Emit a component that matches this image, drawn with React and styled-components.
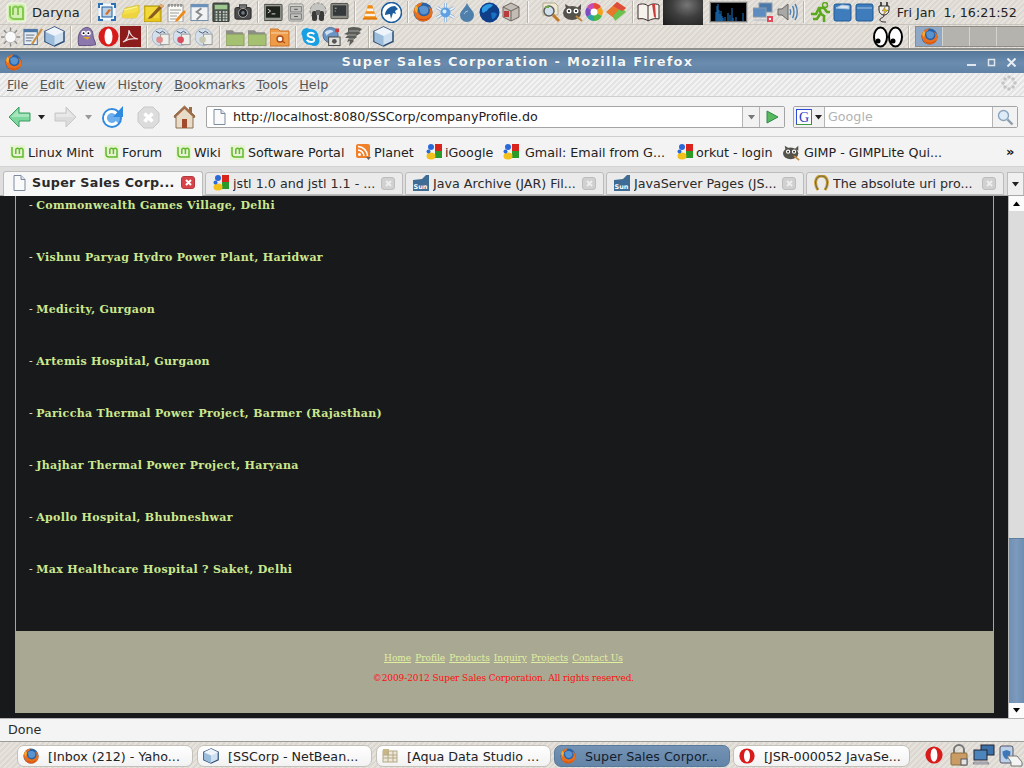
import React from 'react';
import styled, { createGlobalStyle } from 'styled-components';

const GlobalStyle = createGlobalStyle`
  html, body { margin: 0; padding: 0; background: #e4e0da; overflow: hidden; }
  * { box-sizing: border-box; }
`;

const stripes = `repeating-linear-gradient(135deg, #e6e2dc 0 2px, #dcd8d1 2px 4px)`;

const Desktop = styled.div`
  width: 1024px;
  height: 768px;
  display: flex;
  flex-direction: column;
  overflow: hidden;
  font-family: "DejaVu Sans", sans-serif;
  font-size: 12.7px;
  color: #2e3436;
`;

const Panel = styled.div`
  height: ${p => p.$h}px;
  flex: none;
  display: flex;
  align-items: center;
  background: ${stripes};
  border-bottom: ${p => p.$edge || 'none'};
`;

const Slot = styled.div`
  width: ${p => p.$w}px;
  height: 22px;
  margin-left: ${p => p.$ml}px;
  flex: none;
  display: flex;
  align-items: center;
  justify-content: center;
  svg { display: block; }
`;

const Divider = styled.div`
  width: 2px;
  height: 22px;
  flex: none;
  margin-left: ${p => p.$ml}px;
  border-left: 1px solid #b8b4ae;
  border-right: 1px solid #f8f6f2;
`;

const UserName = styled.span`
  margin-left: 5px;
  font-size: 13px;
  color: #222;
  letter-spacing: 0.1px;
`;

const Clock = styled.span`
  margin-left: 6px;
  font-size: 12.7px;
  color: #222;
  white-space: pre;
`;

const Pager = styled.div`
  margin-left: 5px;
  width: 109px;
  height: 21px;
  display: grid;
  grid-template-columns: 27px 27px 27px 28px;
  background: #b9b6b1;
  border: 1px solid #8f8c88;
`;

const PagerCell = styled.div`
  background: ${p => (p.$on ? '#8ea8c6' : '#b5b3ae')};
  border-right: 1px solid #d5d3ce;
  display: flex;
  align-items: center;
  justify-content: center;
`;

const Preview = styled.div`
  width: 40px;
  height: 25px;
  margin-left: 3px;
  flex: none;
  background: radial-gradient(ellipse at 60% 20%, #767676 0%, #3e3e3e 45%, #1c1c1c 100%);
`;

const Graph = styled.div`
  width: 39px;
  height: 22px;
  margin-left: 6px;
  flex: none;
  background: #000;
  border: 1px solid #c4c2bc;
  outline: 1px solid #777;
  outline-offset: -2px;
`;

const TitleBar = styled.div`
  height: 22px;
  flex: none;
  margin-top: 1px;
  padding: 0 5px;
  display: flex;
  align-items: center;
  background: linear-gradient(#54779a, #6b8cae 55%, #5f82a5);
  color: #f4f6f8;
`;

const TitleText = styled.div`
  flex: 1;
  text-align: center;
  font-size: 13px;
  font-weight: bold;
  letter-spacing: 1.25px;
  padding: 0 0 2px 46px;
  text-shadow: 0 0 1px #3e5a78;
`;

const WindowButtons = styled.div`
  display: flex;
  align-items: center;
  gap: 11px;
  margin-right: 3px;
`;

const MenuBar = styled.div`
  height: 24px;
  flex: none;
  display: flex;
  align-items: center;
  padding: 0 8px 0 7px;
  color: #555;
  background: repeating-linear-gradient(135deg, #e4e4e4 0 2px, #f2f2f2 2px 4px);
  border-bottom: 1px solid #cfcfcf;
`;

const MenuItem = styled.span`
  margin-right: 11.5px;
  u { text-underline-offset: 1px; }
`;

const Throbber = styled.div`
  margin-left: auto;
  margin-right: -1px;
`;

const NavBar = styled.div`
  height: 40px;
  flex: none;
  display: flex;
  align-items: center;
  padding: 1px 0 0 8px;
  background: #f3f3f3;
  border-bottom: 1px solid #cfcfcf;
`;

const NavIcon = styled.div`
  width: ${p => p.$w}px;
  margin-left: ${p => p.$ml || 0}px;
  flex: none;
  display: flex;
  align-items: center;
  justify-content: center;
`;

const Field = styled.div`
  height: 22px;
  flex: none;
  width: ${p => p.$w}px;
  margin-left: ${p => p.$ml}px;
  display: flex;
  align-items: stretch;
  background: #fff;
  border: 1px solid #a4a4a4;
  border-radius: 2px;
  line-height: 20px;
`;

const FieldText = styled.div`
  flex: 1;
  display: flex;
  align-items: center;
  gap: 7px;
  padding-left: ${p => (p.$muted ? 3 : 6)}px;
  color: ${p => (p.$muted ? '#b2b2b2' : '#222')};
  white-space: nowrap;
  overflow: hidden;
`;

const FieldButton = styled.div`
  width: ${p => p.$w}px;
  flex: none;
  display: flex;
  align-items: center;
  justify-content: center;
  gap: 2px;
  background: #f2f2f2;
  border-left: ${p => (p.$first ? 'none' : '1px solid #b4b4b4')};
  border-right: ${p => (p.$first ? '1px solid #b4b4b4' : 'none')};
`;

const BookmarksBar = styled.div`
  height: 30px;
  flex: none;
  display: flex;
  align-items: center;
  padding: 1px 0 0 10px;
  background: #f3f3f3;
  border-bottom: 1px solid #d4d4d4;
  color: #222;
`;

const Bookmark = styled.div`
  width: ${p => p.$w}px;
  flex: none;
  display: flex;
  align-items: center;
  gap: ${p => p.$gap || 3}px;
  white-space: nowrap;
`;

const More = styled.span`
  margin-top: -2px;
  font-size: 13px;
  font-weight: bold;
  color: #111;
`;

const TabStrip = styled.div`
  height: 29px;
  flex: none;
  display: flex;
  align-items: flex-end;
  gap: 2px;
  padding-left: 3px;
  background: #dedede;
  border-bottom: 1px solid #a8a8a8;
`;

const Tab = styled.div`
  width: ${p => p.$w}px;
  height: ${p => (p.$active ? 25 : 23)}px;
  flex: none;
  margin-bottom: ${p => (p.$active ? -1 : 0)}px;
  display: flex;
  align-items: center;
  gap: ${p => (p.$active ? 6 : 4)}px;
  padding: 0 7px ${p => (p.$active ? 3 : 1)}px ${p => (p.$active ? 9 : 7)}px;
  background: ${p => (p.$active ? '#f7f7f7' : '#ebebeb')};
  border: 1px solid #bcbcbc;
  border-bottom: ${p => (p.$active ? 'none' : '1px solid #bcbcbc')};
  border-radius: 3px 3px 0 0;
  font-weight: ${p => (p.$active ? 'bold' : 'normal')};
  letter-spacing: ${p => (p.$active ? '0.3px' : '0')};
  color: #2a2a2a;
  white-space: nowrap;
`;

const TabLabel = styled.span`
  flex: 1;
  overflow: hidden;
`;

const TabClose = styled.span`
  width: 14px;
  height: 13px;
  flex: none;
  border-radius: 3px;
  background: ${p => (p.$active ? '#d9444a' : '#d0d0d0')};
  border: 1px solid ${p => (p.$active ? '#b03a40' : '#bdbdbd')};
  display: flex;
  align-items: center;
  justify-content: center;
`;

const TabMenu = styled.div`
  width: 17px;
  height: 23px;
  flex: none;
  margin-left: 1px;
  background: #f0f0f0;
  border: 1px solid #bcbcbc;
  border-bottom: none;
  display: flex;
  align-items: center;
  justify-content: center;
`;

const Viewport = styled.div`
  height: 522px;
  flex: none;
  display: flex;
  background: #18191b;
`;

const Page = styled.div`
  width: 1008px;
  flex: none;
  padding: 0 14px 5px 15px;
  display: flex;
  flex-direction: column;
`;

const Sheet = styled.div`
  flex: 1;
  display: flex;
  flex-direction: column;
  border-left: 1px solid #a9a893;
  border-right: 1px solid #a9a893;
`;

const ProjectList = styled.div`
  flex: 1;
  padding: 2px 0 0 13px;
  font-family: "DejaVu Serif", serif;
`;

const Project = styled.div`
  height: 52px;
  font-size: 11px;
  line-height: 16px;
  font-weight: bold;
  letter-spacing: 0.33px;
  color: #cbe88f;
`;

const Dash = styled.span`
  font-weight: normal;
  letter-spacing: 0;
  color: #dde8c8;
`;

const PageFooter = styled.div`
  height: 82px;
  flex: none;
  background: #a9a893;
  padding-top: 20px;
  padding-right: 2px;
  text-align: center;
  font-family: "DejaVu Serif", serif;
  font-size: 9px;
`;

const FooterLinks = styled.div`
  height: 14px;
  line-height: 14px;
  display: flex;
  justify-content: center;
  gap: 4px;
`;

const FooterLink = styled.a`
  color: #e0f0a0;
  text-decoration: underline;
`;

const Copyright = styled.div`
  margin-top: 6px;
  height: 14px;
  line-height: 14px;
  letter-spacing: -0.1px;
  color: #ff1010;
`;

const Scrollbar = styled.div`
  width: 16px;
  flex: none;
  display: flex;
  flex-direction: column;
  background: #dcdcdc;
  border-left: 1px solid #b8b8b8;
`;

const ScrollButton = styled.div`
  height: 15px;
  flex: none;
  background: #fbfbfb;
  display: flex;
  align-items: center;
  justify-content: center;
`;

const Track = styled.div`
  flex: 1;
  padding-top: 327px;
  display: flex;
`;

const Thumb = styled.div`
  flex: 1;
  background: linear-gradient(90deg, #6f90b4, #7c9abc 50%, #6d8eb2);
  border-top: 1px solid #5f7f9f;
`;

const StatusBar = styled.div`
  height: 24px;
  flex: none;
  display: flex;
  align-items: center;
  padding: 0 0 2px 8px;
  color: #2a2a2a;
  background: #f4f4f4;
  border-top: 1px solid #b4b4b4;
  border-bottom: 1px solid #9c9c9c;
`;

const TaskButton = styled.div`
  width: ${p => p.$w}px;
  height: 22px;
  flex: none;
  margin: 2px 0 0 ${p => p.$ml}px;
  display: flex;
  align-items: center;
  gap: 9px;
  padding-left: 5px;
  border: 1px solid ${p => (p.$active ? '#5a7a9c' : '#c4c0ba')};
  border-radius: 7px;
  background: ${p => (p.$active ? 'linear-gradient(#7392b4, #6485a8)' : 'linear-gradient(#fff, #f2f2f2)')};
  color: ${p => (p.$active ? '#14202c' : '#222')};
  white-space: nowrap;
`;

const Svg = ({ s = 20, h, children }) => (
  <svg width={s} height={h || s} viewBox={`0 0 ${s} ${h || s}`}>{children}</svg>
);

// launchers and tray icons, all hand drawn on a small grid
const Mint = ({ s = 21 }) => (
  <svg width={s} height={s} viewBox="0 0 21 21">
    <rect x="1" y="1" width="19" height="19" rx="4" fill="#d4efb4" stroke="#f2faea" />
    <path d="M4 4v9a4 4 0 0 0 4 4h9V7a2.500 2.500 0 0 0-5 0v6M12 7a2.500 2.500 0 0 0-5 0v6" fill="none" stroke="#84c850" strokeWidth="2" />
  </svg>
);
const Firefox = ({ s = 20 }) => (
  <svg width={s} height={s} viewBox="0 0 20 20">
    <circle cx="10" cy="10" r="9.500" fill="#2a62a8" />
    <path d="M6 6c2-3 7-3 9 0 1 2 0 5-2 6-3 1-5 0-6-2z" fill="#5a94d0" />
    <path d="M1 8C2 3 6 .500 10 .500c-1 1-2 2-2 3-3 1-4 3-3 6 1 4 5 6 9 4 2-1 3-3 3-6-1-1-1-2-2-3 3 1 4.500 4 4.500 6 0 5-4 9-9.500 9S.500 14 1 8z" fill="#e8701c" />
    <path d="M2 13c2 4 6 6 10 5 3-.500 5-2 6-4-3 3-7 4-10 3-3-.500-5-2-6-4z" fill="#c8400f" />
    <path d="M1.500 7c0-1 1-3 2-4 0 1 .5 2 1.500 3-1 2-1 4-1 5-1-1-2-2-2.500-4z" fill="#f8b02c" />
  </svg>
);
const SelectTool = () => (
  <Svg>
    <rect x="1" y="1" width="18" height="18" rx="4" fill="#f4f8fc" stroke="#c8d4e4" />
    <rect x="5" y="5" width="10" height="10" fill="#bcd0e4" stroke="#1f5f9f" />
    <path d="M2 6V2h4M14 2h4v4M18 14v4h-4M6 18H2v-4" fill="none" stroke="#2f6fb4" strokeWidth="2" />
    <path d="M8 12l4-5 2 1-4 5z" fill="#d0702a" />
  </Svg>
);
const Sticky = () => (
  <Svg>
    <path d="M1 13l3-7 14-3v8l-3 5H2z" fill="#f4e04c" stroke="#c8b430" strokeWidth=".6" />
    <path d="M1 13l14-3 3-2v3l-3 5H2z" fill="#eed43e" />
    <path d="M3 8l13-3" stroke="#fff6a0" />
  </Svg>
);
const Note = () => (
  <Svg>
    <rect x="0" y="4" width="17" height="16" fill="#e8c820" stroke="#a89010" />
    <rect x="2" y="5" width="13" height="11" fill="#f2d838" />
    <path d="M5 15L17 2l3 2L8 16l-4 1z" fill="#8a5a20" />
    <path d="M17 2l3 2-2 2-3-2z" fill="#e4b070" />
  </Svg>
);
const Notepad = () => (
  <Svg>
    <rect x="1" y="3" width="15" height="17" fill="#fbfbf6" stroke="#9a9a9a" />
    <path d="M2 2v3M5 2v3M8 2v3M11 2v3M14 2v3" stroke="#666" />
    <path d="M3 8h11M3 11h9M3 14h7M3 17h6" stroke="#9a9a9a" />
    <path d="M9 17l8-9 2 2-8 9-3 1z" fill="#ee8a1c" />
  </Svg>
);
const Windowed = () => (
  <Svg>
    <rect x="1" y="2" width="18" height="17" fill="#f0f2f4" stroke="#6c86a4" />
    <rect x="1" y="2" width="18" height="3" fill="#6a92bc" />
    <path d="M12 6l-5 4 5 3-5 5" fill="none" stroke="#8a8a8a" strokeWidth="2" />
  </Svg>
);
const Calculator = () => (
  <Svg>
    <rect x="1" y="0" width="18" height="21" rx="1" fill="#4c564e" stroke="#2c322e" />
    <rect x="3" y="2" width="14" height="5" fill="#9cc88e" />
    {[9, 12, 15, 18].map(y => [4, 8, 12, 15].map(x => <rect key={`${x}${y}`} x={x} y={y} width="2" height="2" fill="#c8ccc8" />))}
  </Svg>
);
const Camera = () => (
  <Svg>
    <rect x="1" y="5" width="18" height="13" rx="2" fill="#4c4c4c" stroke="#222" />
    <rect x="6" y="2" width="8" height="4" fill="#777" stroke="#333" />
    <circle cx="10" cy="11" r="5" fill="#222" stroke="#aaa" />
    <circle cx="10" cy="11" r="2" fill="#6c7c8c" />
  </Svg>
);
const Terminal = () => (
  <Svg>
    <rect x="0" y="2" width="19" height="17" rx="1" fill="#9a9c96" stroke="#44463f" />
    <rect x="2" y="4" width="15" height="12" fill="#20241f" />
    <path d="M4 7l3 2-3 2M8 12h4" stroke="#e0e0d8" fill="none" />
  </Svg>
);
const Cabinet = () => (
  <Svg>
    <rect x="2" y="1" width="16" height="19" rx="2" fill="#d4d4d0" stroke="#8c8c88" />
    <rect x="4" y="4" width="12" height="6" fill="#c0c0bc" stroke="#777" />
    <rect x="4" y="12" width="12" height="6" fill="#c0c0bc" stroke="#777" />
    <path d="M8 7h4M8 15h4" stroke="#444" />
  </Svg>
);
const Binoculars = () => (
  <Svg>
    <circle cx="10" cy="9" r="8" fill="#c4c4c0" stroke="#8a8a86" strokeDasharray="3 1.500" />
    <rect x="4" y="9" width="5" height="10" rx="2" fill="#3a3a3a" />
    <rect x="11" y="9" width="5" height="10" rx="2" fill="#3a3a3a" />
    <rect x="8" y="8" width="4" height="5" fill="#666" />
  </Svg>
);
const Monitor = () => (
  <Svg>
    <rect x="1" y="1" width="18" height="16" rx="1" fill="#8c8c84" stroke="#4c4c48" />
    <rect x="3" y="3" width="14" height="11" fill="#34383a" />
    <path d="M5 6h2M5 9h1" stroke="#c8c8c8" />
  </Svg>
);
const Vlc = () => (
  <Svg>
    <path d="M7 2h5l5 15H2z" fill="#f08a10" />
    <path d="M6 6h7l1 3H5zM4 12h11l1 3H3z" fill="#f8f4ec" />
    <rect x="1" y="17" width="17" height="2" fill="#e07a0c" />
  </Svg>
);
const Thunder = () => (
  <Svg s={21}>
    <circle cx="10.500" cy="10.500" r="10" fill="#fff" stroke="#1c5c9c" strokeWidth="1.500" />
    <path d="M4 12c1-5 5-8 10-8l3 3-3 2 1 3-3-1-2 6-1-5-5 1z" fill="#1c5c9c" />
  </Svg>
);
const Snow = () => (
  <Svg s={21} h={21}>
    <path d="M10.500 1v19M2 5.500l17 10M19 5.500l-17 10" stroke="#7ea8d4" strokeWidth="3" />
    <path d="M10.500 1v19M2 5.500l17 10M19 5.500l-17 10" stroke="#eef4fc" strokeWidth="1.600" />
    <circle cx="10.500" cy="10.500" r="5" fill="#5ea0e4" />
    <circle cx="9.500" cy="9.500" r="2" fill="#d8ecfc" />
  </Svg>
);
const Drop = () => (
  <Svg s={16} h={20}>
    <path d="M8 1c2 5 7 8 7 12a7 7 0 0 1-14 0C1 9 6 6 8 1z" fill="#4f80ac" />
    <path d="M5 12c1-2 3-3 4-3" stroke="#a8c8e4" fill="none" />
  </Svg>
);
const Globe = () => (
  <Svg s={21} h={21}>
    <circle cx="10.500" cy="10.500" r="10" fill="#0e3f88" />
    <path d="M3 6c3-4 8-5 11-3-2 3-5 3-6 6-2 0-3 3-5 1z" fill="#2c9ae4" />
    <path d="M12 11c3-1 5 0 6 1-1 3-3 5-5 5z" fill="#1c70c4" />
  </Svg>
);
const Pack = () => (
  <Svg s={21} h={21}>
    <path d="M10 1l8 4v10l-8 4-8-4V5z" fill="#c2bcb4" stroke="#6c6660" />
    <path d="M2 5l8 4 8-4M10 9v10" stroke="#6c6660" fill="none" />
    <rect x="3" y="9" width="5" height="6" fill="#b83a3a" />
  </Svg>
);
const Lens = () => (
  <Svg s={22} h={22}>
    <path d="M3 2h12l3 3v9H3z" fill="#f0ead4" stroke="#b0aa90" />
    <circle cx="9" cy="10" r="5" fill="#cfe0ec" stroke="#5c5c5c" strokeWidth="1.500" />
    <path d="M13 14l6 6" stroke="#c07a28" strokeWidth="3" />
    <path d="M5 5h4v2H5z" fill="#6aa84c" />
  </Svg>
);
const Gimp = ({ s = 20 }) => (
  <svg width={s} height={s} viewBox="0 0 20 20">
    <ellipse cx="9" cy="11" rx="9" ry="7" fill="#55524c" />
    <path d="M3 7L2 2l5 3zM14 6l4-4v6z" fill="#55524c" />
    <circle cx="6" cy="9" r="2.500" fill="#fff" /><circle cx="13" cy="9" r="2.500" fill="#fff" />
    <circle cx="6" cy="9" r="1" fill="#000" /><circle cx="13" cy="9" r="1" fill="#000" />
    <path d="M13 14l6 5" stroke="#c08a3c" strokeWidth="2" />
  </svg>
);
const Picasa = () => (
  <Svg s={18} h={20}>
    <path d="M9 10L9 1a9 9 0 0 1 7 4z" fill="#e64a3c" />
    <path d="M9 10l7-5a9 9 0 0 1 1 9z" fill="#f4a21c" />
    <path d="M9 10l8 4a9 9 0 0 1-8 5z" fill="#4cb848" />
    <path d="M9 10v9a9 9 0 0 1-7-4z" fill="#2ca4a4" />
    <path d="M9 10l-7 5a9 9 0 0 1 0-10z" fill="#7c4cc4" />
    <path d="M9 10L2 5a9 9 0 0 1 7-4z" fill="#c84cb4" />
    <circle cx="9" cy="10" r="3.500" fill="#fff" />
  </Svg>
);
const Diamond = () => (
  <Svg s={22} h={22}>
    <path d="M1 11L12 1l9 6-11 11z" fill="#e8782c" />
    <path d="M8 15l8-9 5 5-11 9z" fill="#6cc04c" />
    <path d="M12 1l9 6-4 3-9-5z" fill="#e04c3c" />
  </Svg>
);
const Book = () => (
  <Svg s={23} h={20}>
    <path d="M1 3c4-2 8-1 10 1 3-2 7-3 11-1v14c-4-1-8 0-11 2-2-2-6-3-10-2z" fill="#f6f2ec" stroke="#3c2c2c" />
    <path d="M11 4v15" stroke="#3c2c2c" />
    <path d="M15 2l3 0 1 14-2-1z" fill="#cc3c3c" />
  </Svg>
);
const Network = () => (
  <Svg>
    <rect x="6" y="1" width="13" height="9" fill="#4c78a8" stroke="#8a9aac" />
    <rect x="0" y="6" width="13" height="9" fill="#5c8cc0" stroke="#8a9aac" />
    <path d="M2 17h11l2 2H0z" fill="#c8ccd0" />
    <rect x="14" y="14" width="6" height="6" fill="#e04a5a" />
    <path d="M16 16l2 2M18 16l-2 2" stroke="#fff" />
  </Svg>
);
const Speaker = () => (
  <Svg s={21} h={20}>
    <path d="M1 7h4l6-5v16l-6-5H1z" fill="#a8a8a4" stroke="#666" />
    <path d="M13 7c1 2 1 4 0 6M15.500 4c2 3 2 9 0 12M18 2c3 4 3 12 0 16" stroke="#4c80b4" fill="none" strokeWidth="1.400" />
  </Svg>
);
const Runner = () => (
  <Svg s={21} h={21}>
    <circle cx="15" cy="3" r="2.500" fill="none" stroke="#5aa81c" strokeWidth="1.500" />
    <path d="M1 12h5l3-6h5l3 4h3M9 6l2 6 3 2v6M10 12l-3 5H3" fill="none" stroke="#5aa81c" strokeWidth="2.600" />
  </Svg>
);
const BlueFolder = ({ lid }) => (
  <Svg s={19} h={20}>
    <rect x="1" y="2" width="17" height="17" rx="2" fill="#3e7cbc" stroke="#1f5a94" />
    <path d={lid ? 'M3 6l6-3 7 1v3z' : 'M2 6h15'} fill="#d8e4f0" stroke="#a8c4e0" />
  </Svg>
);
const Plug = () => (
  <Svg s={14} h={22}>
    <path d="M4 1v4M10 1v4" stroke="#222" strokeWidth="1.500" />
    <path d="M2 5h10v4a5 5 0 0 1-10 0z" fill="#f4f4f0" stroke="#222" />
    <path d="M8 6l-3 4h3l-2 4 5-5H8z" fill="#f0c810" stroke="#544" strokeWidth=".4" />
    <path d="M7 14c0 4-4 2-4 5 0 2 4 2 6 2" fill="none" stroke="#222" />
  </Svg>
);
const Sun = () => (
  <Svg>
    <path d="M10 0v20M0 10h20M3 3l14 14M17 3L3 17" stroke="#8c8c8c" strokeWidth="1.500" />
    <circle cx="10" cy="10" r="6" fill="#fafafa" stroke="#bbb" />
  </Svg>
);
const Tasks = () => (
  <Svg s={21} h={21}>
    <rect x="1" y="3" width="14" height="16" fill="#e8eef4" stroke="#4c6c94" />
    <rect x="1" y="3" width="14" height="3" fill="#4c78a8" />
    <path d="M3 9h9M3 12h8M3 15h6" stroke="#5c6c7c" />
    <path d="M9 17L19 2l2 1-10 15-3 2z" fill="#c89040" />
  </Svg>
);
const Cube = ({ s = 21 }) => (
  <svg width={s} height={s} viewBox="0 0 21 21">
    <path d="M10.500 1L20 5.500v10L10.500 20 1 15.500v-10z" fill="#cfe0f0" stroke="#2c4c74" strokeWidth="1.500" />
    <path d="M1 5.500l9.500 4.500 9.500-4.500-9.500-4.500z" fill="#eef4fa" />
    <path d="M1.500 6l9 4v10l-9-4.500z" fill="#9cbcdc" />
  </svg>
);
const Pidgin = () => (
  <Svg s={21} h={21}>
    <path d="M3 20c-2-8 0-18 8-19 6 0 7 6 7 10l3 8c-3 1-7 1-9 1z" fill="#8c78ac" stroke="#5c4c7c" />
    <circle cx="8" cy="7" r="2.500" fill="#fff" /><circle cx="13" cy="7" r="2.500" fill="#fff" />
    <circle cx="8" cy="7" r="1" /><circle cx="13" cy="7" r="1" />
    <path d="M7 11h8l-3 3z" fill="#e8a81c" />
  </Svg>
);
const Opera = ({ s = 21 }) => (
  <svg width={s} height={s} viewBox="0 0 21 21">
    <ellipse cx="10.500" cy="10.500" rx="10" ry="10" fill="#d81c1c" />
    <ellipse cx="10.500" cy="10.500" rx="4" ry="8" fill="#fff" />
  </svg>
);
const Acrobat = () => (
  <Svg s={21} h={21}>
    <rect x="0" y="0" width="21" height="21" fill="#8c1c1c" />
    <path d="M3 16c4-2 6-7 6-12 1 5 4 8 9 9-5-1-10 0-15 3z" fill="none" stroke="#f0e0e0" strokeWidth="1.200" />
  </Svg>
);
const Gnome = ({ tint }) => (
  <Svg>
    <circle cx="9" cy="10" r="9" fill="#d4dfec" stroke="#a4b4c8" />
    <path d="M4 4l4 2 3-2 3 2" fill="none" stroke="#44546c" />
    <rect x="9" y="7" width="9" height="11" fill="#eeeeea" stroke="#999" />
    <circle cx="8" cy="13" r="3.500" fill={tint} />
  </Svg>
);
const GreenFolder = () => (
  <Svg>
    <path d="M0 3h7l2 2h9v3H0z" fill="#8c8c88" />
    <rect x="0" y="7" width="19" height="12" fill="#a4c070" stroke="#8c9c6c" />
  </Svg>
);
const OrangeFolder = () => (
  <Svg>
    <path d="M0 2h8l2 2h9v15H0z" fill="#ee9c48" stroke="#c8742c" />
    <path d="M1 6h17" stroke="#f8d8b0" />
    <circle cx="10" cy="12" r="3" fill="#fff" stroke="#a84c1c" strokeWidth="1.400" />
    <path d="M12 14l3 2" stroke="#a84c1c" strokeWidth="1.400" />
  </Svg>
);
const Skype = () => (
  <Svg>
    <circle cx="6" cy="6" r="5.500" fill="#18a0e4" /><circle cx="14" cy="14" r="5.500" fill="#18a0e4" />
    <circle cx="10" cy="10" r="8.500" fill="#18a0e4" />
    <path d="M14 7c-2-2-7-2-7 1s7 1 7 5c0 3-6 3-8 0" fill="none" stroke="#fff" strokeWidth="2" />
  </Svg>
);
const Backup = () => (
  <Svg>
    <circle cx="9" cy="8" r="8" fill="#6a94c4" stroke="#4c6c94" />
    <path d="M3 5c3-3 7-3 9-1-2 2-6 2-7 5z" fill="#d0e0f0" />
    <rect x="7" y="10" width="12" height="9" fill="#e0e0da" stroke="#444" />
    <circle cx="13" cy="14.500" r="2.500" fill="#555" />
    <rect x="14" y="1" width="4" height="4" fill="#c83c3c" />
  </Svg>
);
const Tornado = () => (
  <Svg s={21} h={21}>
    <path d="M6 2c5-2 11-1 14 1l-3 3 2 1-5 3 1 1-4 3 1 1-5 5 1-5-3 1 2-4-4 0 3-3-4-1 4-2z" fill="#5c5c58" />
    <path d="M7 5h10M6 9h8M7 13h5" stroke="#a4a4a0" />
  </Svg>
);
const Eyes = () => (
  <Svg s={30} h={22}>
    <ellipse cx="7.500" cy="11" rx="6.500" ry="9.500" fill="#fff" stroke="#000" strokeWidth="2" />
    <ellipse cx="22.500" cy="11" rx="6.500" ry="9.500" fill="#fff" stroke="#000" strokeWidth="2" />
    <circle cx="5" cy="15" r="2.500" /><circle cx="20" cy="15" r="2.500" />
  </Svg>
);
const Page16 = () => (
  <Svg s={13} h={16}>
    <path d="M1 .5h7l4 4v11H1z" fill="#fafafa" stroke="#7c8ca0" />
    <path d="M8 .5v4h4" fill="#dde" stroke="#7c8ca0" />
  </Svg>
);
const Goog = () => (
  <Svg s={16} h={16}>
    <circle cx="5" cy="3" r="3" fill="#2a6ad8" />
    <path d="M9 0h7v7H9z" fill="#d8241c" />
    <path d="M9 7h7v7H9z" fill="#2a9a2a" />
    <ellipse cx="5" cy="12" rx="4.500" ry="3.500" fill="#f4c01c" />
    <circle cx="2.500" cy="7.500" r="2" fill="#2a6ad8" />
  </Svg>
);
const MintSmall = () => (
  <Svg s={15} h={15}>
    <rect x="0" y="0" width="15" height="15" fill="#e6f4d4" />
    <path d="M2 2v7a3 3 0 0 0 3 3h8V5a1.800 1.800 0 0 0-3.600 0v4M9.400 5a1.800 1.800 0 0 0-3.600 0v4" fill="none" stroke="#64b830" strokeWidth="1.500" />
  </Svg>
);
const Rss = () => (
  <Svg s={15} h={16}>
    <rect width="14" height="14" rx="2" fill="#f0802a" />
    <circle cx="3.500" cy="10.500" r="1.500" fill="#fff" />
    <path d="M2 6c3 0 6 3 6 6M2 2.500c5 0 9.500 4.500 9.500 9.500" stroke="#fff" fill="none" strokeWidth="1.500" />
    <path d="M10 13h5l-2.500 3z" fill="#666" />
  </Svg>
);
const SunLogo = () => (
  <Svg s={16} h={16}>
    <path d="M0 5l9-1 4-4h3v16H0z" fill="#3f6c94" />
    <text x="0.500" y="14" fontSize="6.500" fontWeight="bold" fill="#fff" fontFamily="'DejaVu Sans', sans-serif">Sun</text>
  </Svg>
);
const Horseshoe = () => (
  <Svg s={15} h={16}>
    <path d="M4 15C0 9 1 1 7.500 1S15 9 11 15" fill="none" stroke="#c8a030" strokeWidth="3" />
    <path d="M4 15C0 9 1 1 7.500 1S15 9 11 15" fill="none" stroke="#445" strokeWidth=".7" />
  </Svg>
);
const DataTable = () => (
  <Svg s={16} h={16}>
    <rect x="1" y="3" width="14" height="11" fill="#eee8d8" stroke="#b4a888" />
    <rect x="1" y="1" width="6" height="6" fill="#c8b888" />
    <path d="M1 7h14M1 10h14M6 3v11M11 3v11" stroke="#b4a888" />
  </Svg>
);
const Cross = ({ c = '#fff' }) => (
  <svg width="7" height="7" viewBox="0 0 7 7"><path d="M1 1l5 5M6 1L1 6" stroke={c} strokeWidth="2" /></svg>
);
const Caret = ({ c = '#222', down = true }) => (
  <svg width="9" height="5" viewBox="0 0 9 5"><path d={down ? 'M1 0h7L4.500 4.500z' : 'M1 5h7L4.500 .5z'} fill={c} /></svg>
);
const ArrowIcon = ({ flip, fill, edge }) => (
  <svg width="23" height="24" viewBox="0 0 23 24" style={flip ? { transform: 'scaleX(-1)' } : undefined}>
    <path d="M1 12L11 2v6h11v8H11v6z" fill={fill} stroke={edge} />
    <path d="M3 12l7-7v4h11v3z" fill="#fff" opacity=".35" />
  </svg>
);
const Reload = () => (
  <svg width="23" height="24" viewBox="0 0 23 24">
    <circle cx="11" cy="13" r="10" fill="#2f8ae0" />
    <circle cx="11" cy="13" r="8" fill="#aad4f8" opacity=".5" />
    <path d="M17 11a6.500 6.500 0 1 0 -1 6" fill="none" stroke="#fff" strokeWidth="3" />
    <path d="M22 1v11H12z" fill="#2f8ae0" />
  </svg>
);
const Stop = () => (
  <svg width="23" height="23" viewBox="0 0 23 23">
    <path d="M7 1h9l6 6v9l-6 6H7l-6-6V7z" fill="#dcdcdc" stroke="#c8c8c8" />
    <path d="M7.500 7.500l8 8M15.500 7.500l-8 8" stroke="#fff" strokeWidth="3.500" />
  </svg>
);
const Home = () => (
  <svg width="23" height="24" viewBox="0 0 23 24">
    <path d="M1 11L11.500 1 22 11l-1 2-1-1v11H3V12l-1 1z" fill="#e8dcc8" stroke="#8c6c4c" />
    <path d="M11.500 1L1 11l1 2L11.500 4 21 13l1-2z" fill="#a06c48" />
    <rect x="9" y="14" width="5" height="9" fill="#a04c2c" />
    <rect x="16" y="2" width="3" height="6" fill="#a06c48" />
  </svg>
);
const Go = () => (
  <svg width="13" height="14" viewBox="0 0 13 14"><path d="M1 1l11 6-11 6z" fill="#58b860" stroke="#2c8c48" /></svg>
);
const GoogleG = () => (
  <svg width="16" height="16" viewBox="0 0 16 16">
    <rect x=".5" y=".5" width="15" height="15" fill="#fff" stroke="#2a4ad8" />
    <path d="M15.500 .5v15H.5" fill="none" stroke="#d83c2c" />
    <path d="M.5 15.500h15" stroke="#3c9a3c" />
    <text x="8" y="13" textAnchor="middle" fontSize="14" fontFamily="'Liberation Serif', serif" fill="#1c3cc4">G</text>
  </svg>
);
const Magnifier = () => (
  <svg width="17" height="17" viewBox="0 0 17 17">
    <circle cx="6.500" cy="6.500" r="5" fill="#dcecf8" stroke="#8ca4bc" strokeWidth="1.400" />
    <path d="M10.500 10.500l5 5" stroke="#8c9cac" strokeWidth="2.400" />
  </svg>
);
const Throb = () => (
  <svg width="16" height="16" viewBox="0 0 16 16">
    {[[8, 2], [12, 4], [14, 8], [12, 12], [8, 14], [4, 12], [2, 8], [4, 4]].map(([x, y]) => (
      <circle key={`${x}-${y}`} cx={x} cy={y} r="1.800" fill="#c4c4c4" />
    ))}
  </svg>
);
const Spectrum = () => (
  <svg width="37" height="20" viewBox="0 0 37 20">
    <path d="M6 19V10M7 19V4M8 19V2M9 19V8M10 19V12M11 19V9M12 19V14M13 19V16M15 19V15M18 19V11M20 19V13M22 19V6M23 19V16M26 19V15M33 19V11" stroke="#1c78c8" />
  </svg>
);
const Lock = () => (
  <Svg s={18} h={22}>
    <path d="M4 9V6a5 5 0 0 1 10 0v3" fill="none" stroke="#777" strokeWidth="2" />
    <rect x="1" y="9" width="16" height="12" rx="1" fill="#c89c64" stroke="#8a6c3c" />
    <rect x="11" y="15" width="6" height="6" fill="#e4e4de" stroke="#556" />
  </Svg>
);
const Computers = () => (
  <Svg s={22} h={22}>
    <rect x="8" y="1" width="13" height="10" fill="#3c70a8" stroke="#223" />
    <rect x="1" y="6" width="13" height="10" fill="#4c84bc" stroke="#223" />
    <path d="M1 18h14l1 2H0z" fill="#c4c8cc" stroke="#445" strokeWidth=".5" />
  </Svg>
);
const Shield = () => (
  <Svg s={24} h={24}>
    <rect x="1" y="3" width="13" height="17" rx="2" fill="#bcd0e8" stroke="#556" />
    <path d="M7.500 7l4 1.500c0 4-1 6-4 8-3-2-4-4-4-8z" fill="#3c78b8" />
    <path d="M8 13h10l5 6v4H12v-4z" fill="#f4f4f4" stroke="#777" />
  </Svg>
);
const Min = () => <svg width="9" height="9" viewBox="0 0 9 9"><path d="M0 7h9" stroke="#dfe6ee" strokeWidth="2" /></svg>;
const Max = () => <svg width="9" height="9" viewBox="0 0 9 9"><rect x="1.500" y="1.500" width="6" height="6" fill="none" stroke="#dfe6ee" strokeWidth="1.500" /></svg>;
const Close = () => <svg width="9" height="9" viewBox="0 0 9 9"><path d="M.5.5l8 8M8.500.5l-8 8" stroke="#e8edf2" strokeWidth="2" /></svg>;

const GimpSmall = () => <Gimp s={17} />;

const topGroups = [
  { lead: 5, items: [[SelectTool, 20, 0], [Sticky, 20, 4], [Note, 20, 3], [Notepad, 21, 3], [Windowed, 19, 2], [Calculator, 18, 3], [Camera, 18, 4]] },
  { lead: 5, items: [[Terminal, 19, 0], [Cabinet, 18, 4], [Binoculars, 20, 3], [Monitor, 19, 2]] },
  { lead: 6, items: [[Vlc, 17, 0], [Thunder, 21, 2]] },
  { lead: 4, items: [[Firefox, 21, 0], [Snow, 21, 1], [Drop, 16, 3], [Globe, 21, 4], [Pack, 21, 1]] },
  { lead: 11, items: [[Lens, 22, 0], [Gimp, 21, 1], [Picasa, 18, 1], [Diamond, 22, 2]] },
  { lead: 3, items: [[Book, 23, 0]] },
];

const GnomeRose = () => <Gnome tint="#e08a8a" />;
const GnomeRed = () => <Gnome tint="#d84c5c" />;
const GnomeSand = () => <Gnome tint="#c8c8b0" />;

const lowerGroups = [
  { lead: 1, items: [[Sun, 19, 0], [Tasks, 20, 3], [Cube, 21, 1]] },
  { lead: 4, items: [[Pidgin, 20, 0], [Opera, 21, 2], [Acrobat, 21, 1]] },
  { lead: 4, items: [[GnomeRose, 19, 0], [GnomeRed, 19, 2], [GnomeSand, 19, 3]] },
  { lead: 5, items: [[GreenFolder, 19, 0], [GreenFolder, 19, 3], [OrangeFolder, 20, 3]] },
  { lead: 4, items: [[Skype, 19, 0], [Backup, 19, 2], [Tornado, 21, 1]] },
  { lead: 3, items: [[Cube, 21, 0]] },
];

const bookmarks = [
  [MintSmall, 'Linux Mint', 94], [MintSmall, 'Forum', 72], [MintSmall, 'Wiki', 54], [MintSmall, 'Software Portal', 126],
  [Rss, 'Planet', 70], [Goog, 'iGoogle', 77], [Goog, 'Gmail: Email from G...', 174, 6], [Goog, 'orkut - login', 106], [GimpSmall, 'GIMP - GIMPLite Qui...', 223, 4],
];

const tabs = [
  [Goog, 'jstl 1.0 and jstl 1.1 - ...', 198], [SunLogo, 'Java Archive (JAR) Fil...', 199], [SunLogo, 'JavaServer Pages (JS...', 198], [Horseshoe, 'The absolute uri pro...', 198],
];

const projects = [
  'Commonwealth Games Village, Delhi', 'Vishnu Paryag Hydro Power Plant, Haridwar', 'Medicity, Gurgaon', 'Artemis Hospital, Gurgaon',
  'Pariccha Thermal Power Project, Barmer (Rajasthan)', 'Jhajhar Thermal Power Project, Haryana', 'Apollo Hospital, Bhubneshwar', 'Max Healthcare Hospital ? Saket, Delhi',
];

const footerLinks = ['Home', 'Profile', 'Products', 'Inquiry', 'Projects', 'Contact Us'];

const Launchers = ({ groups }) => groups.map((g, i) => (
  <React.Fragment key={i}>
    {g.items.map(([Icon, w, ml], j) => (
      <Slot key={j} $w={w} $ml={j === 0 ? g.lead : ml}><Icon /></Slot>
    ))}
    {i < groups.length - 1 && <Divider $ml={5} />}
  </React.Fragment>
));

export default function App() {
  return (
    <Desktop>
      <GlobalStyle />
      <Panel $h={25} $edge="1px solid #c8c4be">
        <Slot $w={21} $ml={6}><Mint /></Slot>
        <UserName>Daryna</UserName>
        <Divider $ml={10} />
        <Launchers groups={topGroups} />
        <Preview />
        <Graph><Spectrum /></Graph>
        <Slot $w={20} $ml={5}><Network /></Slot>
        <Slot $w={21} $ml={4}><Speaker /></Slot>
        <Divider $ml={5} />
        <Slot $w={21} $ml={5}><Runner /></Slot>
        <Slot $w={19} $ml={2}><BlueFolder lid /></Slot>
        <Slot $w={19} $ml={3}><BlueFolder /></Slot>
        <Slot $w={14} $ml={3}><Plug /></Slot>
        <Clock>Fri Jan  1, 16:21:52</Clock>
      </Panel>
      <Panel $h={25} $edge="2px solid #8e8e8a">
        <Launchers groups={lowerGroups} />
        <Slot $w={30} $ml={479}><Eyes /></Slot>
        <Divider $ml={5} />
        <Pager>
          <PagerCell $on><Firefox s={17} /></PagerCell>
          <PagerCell />
          <PagerCell />
          <PagerCell />
        </Pager>
      </Panel>
      <TitleBar>
        <Firefox s={17} />
        <TitleText>Super Sales Corporation - Mozilla Firefox</TitleText>
        <WindowButtons><Min /><Max /><Close /></WindowButtons>
      </TitleBar>
      <MenuBar>
        <MenuItem><u>F</u>ile</MenuItem>
        <MenuItem><u>E</u>dit</MenuItem>
        <MenuItem><u>V</u>iew</MenuItem>
        <MenuItem>Hi<u>s</u>tory</MenuItem>
        <MenuItem><u>B</u>ookmarks</MenuItem>
        <MenuItem><u>T</u>ools</MenuItem>
        <MenuItem><u>H</u>elp</MenuItem>
        <Throbber><Throb /></Throbber>
      </MenuBar>
      <NavBar>
        <NavIcon $w={23}><ArrowIcon fill="#7cd89c" edge="#3c9c64" /></NavIcon>
        <NavIcon $w={9} $ml={6}><Caret /></NavIcon>
        <NavIcon $w={23} $ml={8}><ArrowIcon flip fill="#dcdcdc" edge="#c8c8c8" /></NavIcon>
        <NavIcon $w={9} $ml={7}><Caret c="#999" /></NavIcon>
        <NavIcon $w={23} $ml={8}><Reload /></NavIcon>
        <NavIcon $w={23} $ml={13}><Stop /></NavIcon>
        <NavIcon $w={23} $ml={13}><Home /></NavIcon>
        <Field $w={579} $ml={10}>
          <FieldText><Page16 />http://localhost:8080/SSCorp/companyProfile.do</FieldText>
          <FieldButton $w={17}><Caret c="#777" /></FieldButton>
          <FieldButton $w={25}><Go /></FieldButton>
        </Field>
        <Field $w={225} $ml={8}>
          <FieldButton $w={31} $first><GoogleG /><Caret /></FieldButton>
          <FieldText $muted>Google</FieldText>
          <FieldButton $w={25}><Magnifier /></FieldButton>
        </Field>
      </NavBar>
      <BookmarksBar>
        {bookmarks.map(([Icon, label, w, gap]) => (
          <Bookmark key={label} $w={w} $gap={gap}><Icon />{label}</Bookmark>
        ))}
        <More>»</More>
      </BookmarksBar>
      <TabStrip>
        <Tab $active $w={200}>
          <Page16 />
          <TabLabel>Super Sales Corp...</TabLabel>
          <TabClose $active><Cross /></TabClose>
        </Tab>
        {tabs.map(([Icon, label, w]) => (
          <Tab key={label} $w={w}>
            <Icon />
            <TabLabel>{label}</TabLabel>
            <TabClose><Cross c="#eee" /></TabClose>
          </Tab>
        ))}
        <TabMenu><Caret /></TabMenu>
      </TabStrip>
      <Viewport>
        <Page>
          <Sheet>
            <ProjectList>
              {projects.map(name => (
                <Project key={name}><Dash>- </Dash>{name}</Project>
              ))}
            </ProjectList>
            <PageFooter>
              <FooterLinks>
                {footerLinks.map(l => <FooterLink key={l}>{l}</FooterLink>)}
              </FooterLinks>
              <Copyright>©2009-2012 Super Sales Corporation. All rights reserved.</Copyright>
            </PageFooter>
          </Sheet>
        </Page>
        <Scrollbar>
          <ScrollButton><Caret c="#000" down={false} /></ScrollButton>
          <Track><Thumb /></Track>
          <ScrollButton><Caret c="#000" /></ScrollButton>
        </Scrollbar>
      </Viewport>
      <StatusBar>Done</StatusBar>
      <Panel $h={26}>
        <TaskButton $w={176} $ml={17}><Firefox s={16} />[Inbox (212) - Yaho...</TaskButton>
        <TaskButton $w={175} $ml={4}><Cube s={16} />[SSCorp - NetBean...</TaskButton>
        <TaskButton $w={175} $ml={4}><DataTable />[Aqua Data Studio ...</TaskButton>
        <TaskButton $w={176} $ml={3} $active><Firefox s={16} />Super Sales Corpor...</TaskButton>
        <TaskButton $w={177} $ml={3}><Opera s={16} />[JSR-000052 JavaSe...</TaskButton>
        <Slot $w={18} $ml={15}><Opera s={18} /></Slot>
        <Slot $w={18} $ml={7}><Lock /></Slot>
        <Slot $w={22} $ml={5}><Computers /></Slot>
        <Slot $w={24} $ml={4}><Shield /></Slot>
      </Panel>
    </Desktop>
  );
}
